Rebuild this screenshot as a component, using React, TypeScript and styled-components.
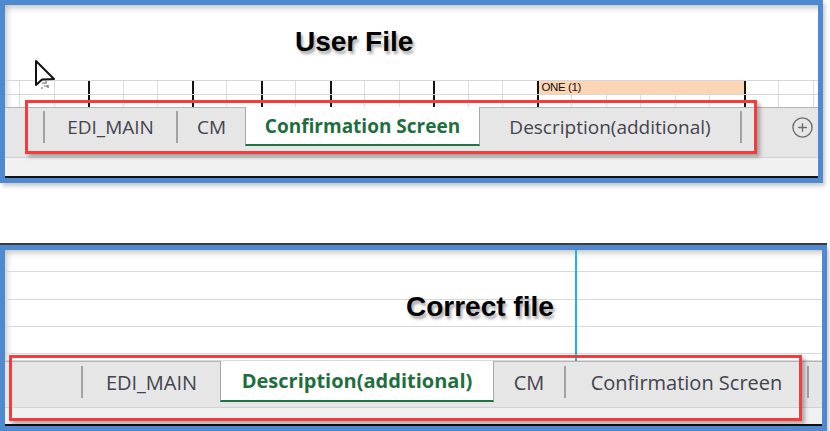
import React from "react";
import styled, { createGlobalStyle } from "styled-components";
import { CirclePlus } from "lucide-react";

const GlobalStyle = createGlobalStyle`
  html, body {
    margin: 0;
    padding: 0;
    background: #ffffff;
  }
  body {
    width: 830px;
    height: 431px;
    overflow: hidden;
    font-family: "Open Sans", "Noto Sans", sans-serif;
  }
`;

const Page = styled.div`
  display: flex;
  flex-direction: column;
  width: 830px;
  height: 431px;
`;

const Frame = styled.div<{ $width: number; $height: number; $top: number; $capped?: boolean }>`
  box-sizing: border-box;
  margin-top: ${(p) => p.$top}px;
  width: ${(p) => p.$width}px;
  height: ${(p) => p.$height}px;
  border: 5px solid #4f8ad0;
  box-shadow: ${(p) => (p.$capped ? "0 -2px 0 #3d3d3d, " : "")}2px 3px 4px rgba(0, 0, 0, 0.22);
`;

const Sheet = styled.div`
  position: relative;
  display: flex;
  flex-direction: column;
  height: 100%;
  overflow: hidden;
  background: #ffffff;
  box-shadow: inset 5px 6px 7px -4px rgba(0, 0, 0, 0.28);
`;

const TitleArea = styled.div`
  height: 75px;
  padding: 23px 0 0 290px;
  box-sizing: border-box;
`;

const Title = styled.div`
  font-family: "Liberation Sans", Arial, sans-serif;
  font-weight: 700;
  font-size: 28px;
  line-height: 28px;
  color: #000;
  white-space: nowrap;
  text-shadow: 2px 3px 3px rgba(0, 0, 0, 0.35);
`;

const FloatingTitle = styled(Title)`
  position: absolute;
  left: 401px;
  top: 43px;
`;

const Cursor = styled.svg`
  position: absolute;
  left: 28px;
  top: 53px;
`;

const GridRow = styled.div<{ $h: number }>`
  display: flex;
  height: ${(p) => p.$h}px;
  border-top: 1px solid #d6d6d6;
  box-sizing: border-box;
  flex: none;
`;

const LeadCell = styled.div`
  width: 14px;
  flex: none;
`;

const Cell = styled.div<{ $dark?: boolean; $span?: number; $fill?: string }>`
  box-sizing: border-box;
  flex: none;
  width: ${(p) => (p.$span ?? 1) * 34.5}px;
  border-left: ${(p) => (p.$dark ? "2px solid #141414" : "1px solid #dcdcdc")};
  background: ${(p) => p.$fill ?? "transparent"};
  font-family: "Liberation Sans", Arial, sans-serif;
  font-size: 11.5px;
  line-height: 12px;
  letter-spacing: -0.4px;
  padding-left: 3px;
  color: #111;
  white-space: nowrap;
`;

const Blank = styled.div<{ $h: number }>`
  height: ${(p) => p.$h}px;
  flex: none;
  box-sizing: border-box;
  border-bottom: 1px solid #d9d9d9;
`;

const TabBar = styled.div<{ $h: number; $pad: number }>`
  display: flex;
  align-items: stretch;
  flex: none;
  box-sizing: border-box;
  height: ${(p) => p.$h}px;
  padding-bottom: ${(p) => p.$pad}px;
  background: #e6e6e6;
  border-top: 1px solid #b4b4b4;
`;

const NavArea = styled.div<{ $w: number }>`
  width: ${(p) => p.$w}px;
  flex: none;
`;

const Tab = styled.div<{ $w: number; $size: number; $active?: boolean }>`
  box-sizing: border-box;
  flex: none;
  width: ${(p) => p.$w}px;
  display: flex;
  align-items: center;
  justify-content: center;
  font-size: ${(p) => p.$size}px;
  white-space: nowrap;
  color: ${(p) => (p.$active ? "#1e6e3e" : "#43434f")};
  font-weight: ${(p) => (p.$active ? 700 : 400)};
  ${(p) =>
    p.$active &&
    `
    background: #ffffff;
    margin-top: -1px;
    border-left: 1px solid #a9a9a9;
    border-right: 1px solid #a9a9a9;
    border-bottom: 2px solid #217346;
  `}
`;

const Divider = styled.div`
  width: 2px;
  flex: none;
  align-self: center;
  height: 32px;
  background: #a2a2a2;
`;

const AddArea = styled.div`
  flex: 1;
  display: flex;
  align-items: center;
  justify-content: flex-end;
  padding-right: 4px;
  color: #6a6a6a;
`;

const Strip = styled.div`
  flex: 1;
  background: #f1f1f1;
  border-top: 1px solid #d2d2d2;
`;

const BaseRule = styled.div`
  height: 2px;
  flex: none;
  background: #111;
`;

const Highlight = styled.div<{ $x: number; $y: number; $w: number; $h: number }>`
  position: absolute;
  left: ${(p) => p.$x}px;
  top: ${(p) => p.$y}px;
  width: ${(p) => p.$w}px;
  height: ${(p) => p.$h}px;
  box-sizing: border-box;
  border: 3px solid #f43c3c;
  box-shadow: 3px 3px 4px rgba(0, 0, 0, 0.3);
  pointer-events: none;
`;

const SplitLine = styled.div`
  position: absolute;
  left: 570px;
  top: 0;
  width: 2px;
  height: 111px;
  background: #13b6ea;
`;

const darkCols = new Set([2, 5, 7, 9, 12, 15, 21]);
const cols = Array.from({ length: 24 }, (_, i) => i);

function PointerCursor() {
  return (
    <Cursor width="28" height="34" viewBox="0 0 28 34">
      <path
        d="M3 3 L3 27 L9 21.5 L21 21 Z"
        fill="#fff"
        stroke="#111"
        strokeWidth="2"
        strokeLinejoin="round"
      />
      <path
        d="M9 25 h3 M13 23 v3 M11 28 h4 M15 27 v3 M8 30 h2"
        stroke="#666"
        strokeWidth="1.2"
      />
    </Cursor>
  );
}

function UserFile() {
  return (
    <Frame $width={823} $height={183} $top={0}>
      <Sheet>
        <TitleArea>
          <Title>User File</Title>
        </TitleArea>
        <PointerCursor />
        <GridRow $h={14}>
          <LeadCell />
          {cols.slice(0, 15).map((c) => (
            <Cell key={c} $dark={darkCols.has(c)} />
          ))}
          <Cell $dark $span={6} $fill="#fcd5b4">
            ONE (1)
          </Cell>
          {cols.slice(21).map((c) => (
            <Cell key={c} $dark={darkCols.has(c)} />
          ))}
        </GridRow>
        <GridRow $h={13}>
          <LeadCell />
          {cols.map((c) => (
            <Cell key={c} $dark={darkCols.has(c)} />
          ))}
        </GridRow>
        <TabBar $h={50} $pad={11}>
          <NavArea $w={38} />
          <Divider />
          <Tab $w={131} $size={19}>EDI_MAIN</Tab>
          <Divider />
          <Tab $w={67} $size={19}>CM</Tab>
          <Tab $w={235} $size={19} $active>
            Confirmation Screen
          </Tab>
          <Tab $w={260} $size={19}>Description(additional)</Tab>
          <Divider />
          <AddArea>
            <CirclePlus size={23} strokeWidth={1.4} />
          </AddArea>
        </TabBar>
        <Strip />
        <BaseRule />
        <Highlight $x={20} $y={95} $w={732} $h={54} />
      </Sheet>
    </Frame>
  );
}

function CorrectFile() {
  return (
    <Frame $width={827} $height={186} $top={62} $capped>
      <Sheet>
        <Blank $h={22} />
        <Blank $h={28} />
        <Blank $h={27} />
        <Blank $h={27} />
        <Blank $h={7} />
        <SplitLine />
        <FloatingTitle>Correct file</FloatingTitle>
        <TabBar $h={46} $pad={5}>
          <NavArea $w={76} />
          <Divider />
          <Tab $w={137} $size={20}>EDI_MAIN</Tab>
          <Tab $w={274} $size={20} $active>
            Description(additional)
          </Tab>
          <Tab $w={70} $size={20}>CM</Tab>
          <Divider />
          <Tab $w={241} $size={20}>Confirmation Screen</Tab>
          <Divider />
        </TabBar>
        <Strip />
        <BaseRule />
        <Highlight $x={4} $y={105} $w={793} $h={66} />
      </Sheet>
    </Frame>
  );
}

export default function App() {
  return (
    <>
      <GlobalStyle />
      <Page>
        <UserFile />
        <CorrectFile />
      </Page>
    </>
  );
}
